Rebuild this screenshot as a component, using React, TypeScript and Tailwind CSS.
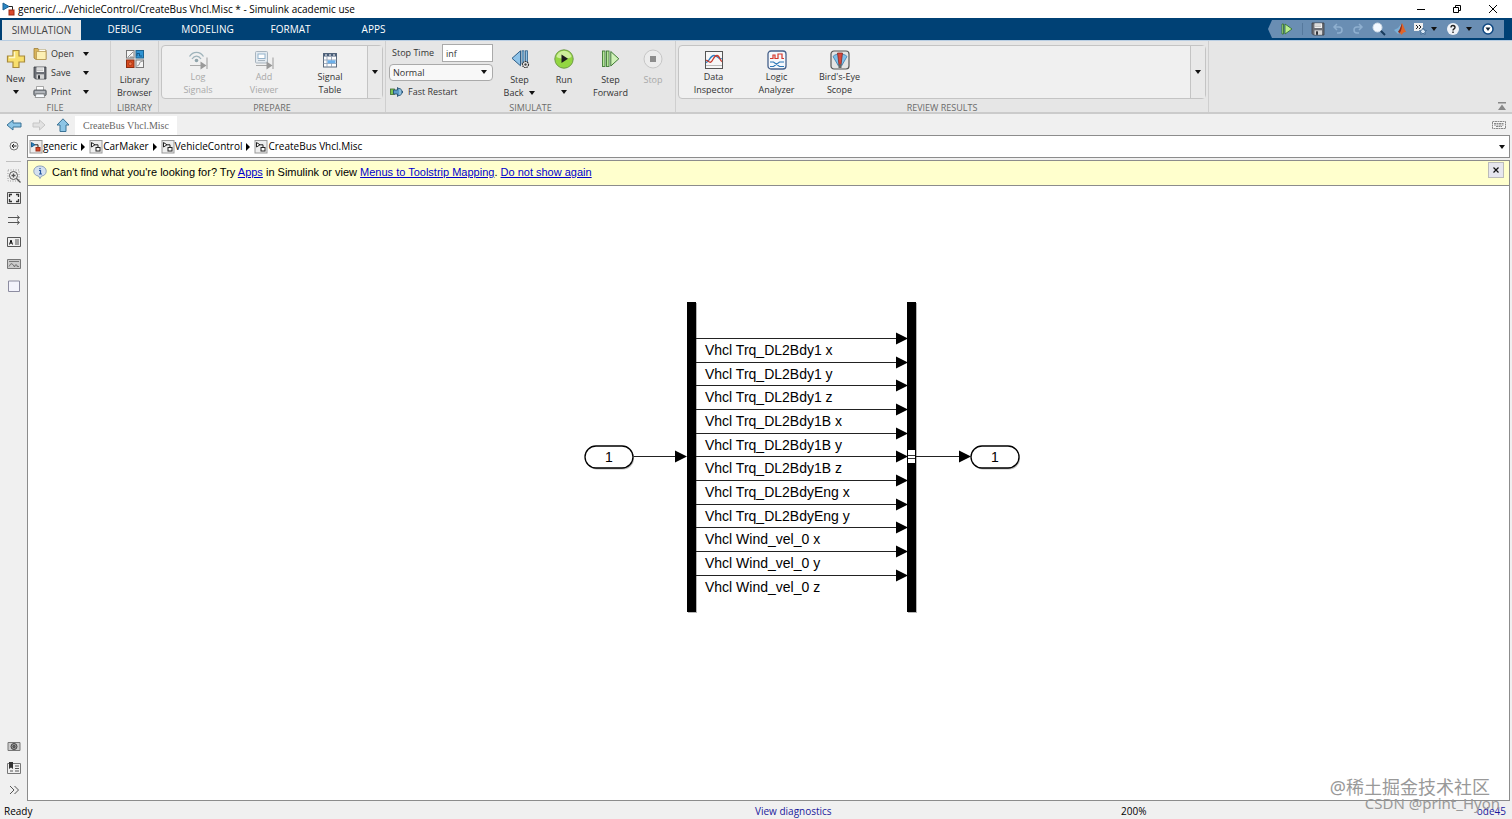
import { useState } from "react";
import type { ReactNode } from "react";
import clsx from "clsx";

const tabs = ["DEBUG", "MODELING", "FORMAT", "APPS"];

const signals = [
    "Vhcl Trq_DL2Bdy1 x",
    "Vhcl Trq_DL2Bdy1 y",
    "Vhcl Trq_DL2Bdy1 z",
    "Vhcl Trq_DL2Bdy1B x",
    "Vhcl Trq_DL2Bdy1B y",
    "Vhcl Trq_DL2Bdy1B z",
    "Vhcl Trq_DL2BdyEng x",
    "Vhcl Trq_DL2BdyEng y",
    "Vhcl Wind_vel_0 x",
    "Vhcl Wind_vel_0 y",
    "Vhcl Wind_vel_0 z",
];

function Caret({ className }: { className?: string }) {
    return (
        <svg viewBox="0 0 6 4" className={clsx("h-1 w-1.5 shrink-0", className)}>
            <path d="M0 0h6L3 4z" fill="#111" />
        </svg>
    );
}

/* ---------- toolstrip icons ---------- */

function NewIcon() {
    return (
        <svg viewBox="0 0 20 20" className="size-5">
            <path d="M7 1.500h6V7h5.500v6H13v5.500H7V13H1.500V7H7z" fill="#f8df6c" stroke="#a88a3c" strokeWidth="1.200" />
            <path d="M8.500 3v5.500H3" stroke="#fff8c8" strokeWidth="1.500" fill="none" />
        </svg>
    );
}

function OpenIcon() {
    return (
        <svg viewBox="0 0 14 14" className="size-3.5">
            <path d="M1 1.500h4l1 1.500h7v9.500H3L1 11z" fill="#d9b45c" stroke="#a07f35" strokeWidth="0.800" />
            <path d="M6 2.500h6.500V5H6z" fill="#fffdf2" stroke="#bbb08a" strokeWidth="0.500" />
            <path d="M3.500 4.500H13v8H3.500z" fill="#fdf0b4" stroke="#b3924c" strokeWidth="0.700" />
        </svg>
    );
}

function SaveIcon() {
    return (
        <svg viewBox="0 0 14 14" className="size-3.5">
            <path d="M1 1h12v12H2.500L1 11.500z" fill="#6c6f76" stroke="#3d4045" strokeWidth="0.800" />
            <rect x="3.500" y="1.300" width="7.500" height="4.700" fill="#f2f2f2" />
            <path d="M4 3h6M4 4.500h6" stroke="#aaa" strokeWidth="0.600" />
            <rect x="3.500" y="8.300" width="7.500" height="4.500" fill="#d5d5d5" />
            <rect x="5" y="9.300" width="2" height="3.500" fill="#33363b" />
        </svg>
    );
}

function PrintIcon() {
    return (
        <svg viewBox="0 0 14 14" className="size-3.5">
            <path d="M3.500 1.500h7V6h-7z" fill="#fff" stroke="#888" strokeWidth="0.700" />
            <rect x="0.800" y="5" width="12.400" height="5.500" rx="1" fill="#8d9299" stroke="#4b5057" strokeWidth="0.800" />
            <path d="M2 7h10" stroke="#d7dade" />
            <path d="M3 9h8l.8 3.500H2.200z" fill="#f7fbff" stroke="#777" strokeWidth="0.700" />
        </svg>
    );
}

function LibraryIcon() {
    return (
        <svg viewBox="0 0 20 20" className="size-5">
            <rect x="1.500" y="1.500" width="7.500" height="7.500" fill="#f4f4f4" stroke="#777" />
            <path d="M3 8l5-5M5 8h3" stroke="#777" strokeWidth="0.800" fill="none" />
            <rect x="11" y="1.500" width="7.500" height="7.500" fill="#2f93d3" stroke="#1d6390" />
            <path d="M12 7V4.500h2.500v2.500H17" stroke="#0c4a78" strokeWidth="0.800" fill="none" />
            <rect x="1.500" y="11" width="7.500" height="7.500" fill="#d94a1e" stroke="#8b2c10" />
            <circle cx="5.300" cy="14.800" r="1.800" fill="#f0774a" stroke="#8b2c10" strokeWidth="0.600" />
            <rect x="11" y="11" width="7.500" height="7.500" fill="#f4f4f4" stroke="#777" />
            <path d="M12 17l2-1 1-3 3-1" stroke="#888" strokeWidth="0.800" fill="none" />
        </svg>
    );
}

function LogSignalsIcon() {
    return (
        <svg viewBox="0 0 20 20" className="size-5" fill="none">
            <path d="M1.500 6.500C5 1 12 1 15.500 6.500M4 9c2.500-3.800 6.500-3.800 9 0" stroke="#9fb4bb" strokeWidth="1.300" />
            <circle cx="8.500" cy="10.500" r="1.800" fill="#8fa4ab" />
            <path d="M2 15.500h12M19 7.500V19" stroke="#aaa" strokeWidth="1.200" />
            <path d="M12.500 11.500l6 4-6 4z" fill="#999" />
        </svg>
    );
}

function AddViewerIcon() {
    return (
        <svg viewBox="0 0 20 20" className="size-5" fill="none">
            <rect x="1.500" y="1.500" width="12" height="11.500" rx="1" fill="#e3eaf0" stroke="#a9b5bf" />
            <rect x="4" y="4" width="7" height="4.500" fill="#fff" stroke="#94b3cc" />
            <path d="M4 10.500h7" stroke="#a9b5bf" />
            <path d="M2 15.500h12M19 7.500V19" stroke="#aaa" strokeWidth="1.200" />
            <path d="M12.500 11.500l6 4-6 4z" fill="#999" />
        </svg>
    );
}

function SignalTableIcon() {
    return (
        <svg viewBox="0 0 20 20" className="size-5">
            <rect x="3.500" y="3.500" width="13" height="13.500" fill="#fdfdfd" stroke="#5b6a7c" />
            <rect x="3.500" y="3.500" width="13" height="3" fill="#4a5f7a" />
            <path d="M7 6.500V17M11.500 6.500V17M3.500 10h13M3.500 13.500h13" stroke="#8a9bb0" strokeWidth="0.800" />
            <rect x="7.500" y="10.300" width="8" height="3" fill="#6cb0ea" />
            <path d="M5 5h2M9 5h2M13 5h2" stroke="#fff" />
        </svg>
    );
}

function StepBackIcon() {
    return (
        <svg viewBox="0 0 20 20" className="size-5">
            <path d="M10.500 1.800v15L2 9.300z" fill="#8fc3e8" stroke="#2f5f88" />
            <rect x="12" y="1.800" width="2" height="13" fill="#8fc3e8" stroke="#2f5f88" strokeWidth="0.800" />
            <rect x="15.500" y="1.800" width="2" height="13" fill="#8fc3e8" stroke="#2f5f88" strokeWidth="0.800" />
            <circle cx="15.500" cy="15.500" r="3" fill="#eee" stroke="#333" strokeWidth="1.200" strokeDasharray="1.6 0.6" />
            <circle cx="15.500" cy="15.500" r="1.200" fill="#444" />
        </svg>
    );
}

function RunIcon() {
    return (
        <svg viewBox="0 0 20 20" className="size-5">
            <circle cx="10" cy="10" r="9.200" fill="#93d641" stroke="#6f9a48" />
            <path d="M2.500 8a7.600 7.600 0 0115 0c-4 2-11 2-15 0z" fill="#cdee9b" />
            <path d="M7.500 5.500l6.500 4.300-6.500 4.300z" fill="#1c1c1c" />
        </svg>
    );
}

function StepForwardIcon() {
    return (
        <svg viewBox="0 0 20 20" className="size-5">
            <rect x="1.500" y="2" width="2.500" height="15.500" fill="#b5e79a" stroke="#3f7a35" strokeWidth="0.900" />
            <rect x="5.500" y="2" width="2.500" height="15.500" fill="#b5e79a" stroke="#3f7a35" strokeWidth="0.900" />
            <path d="M9.800 2.500v14.500l8-7.200z" fill="#d0f2b8" stroke="#3f7a35" />
        </svg>
    );
}

function StopIcon() {
    return (
        <svg viewBox="0 0 20 20" className="size-5">
            <circle cx="10" cy="10" r="9" fill="#ececec" stroke="#c6c6c6" />
            <rect x="7" y="7" width="6" height="6" fill="#8d8d8d" />
        </svg>
    );
}

function FastRestartIcon() {
    return (
        <svg viewBox="0 0 14 14" className="size-3.5">
            <rect x="0.500" y="4" width="4" height="5.500" fill="#7cc455" stroke="#3e6c2c" strokeWidth="0.800" />
            <path d="M3.500 5h4V2.500L13 7l-5.500 4.500V9h-4z" fill="#5b9bc8" stroke="#244e70" strokeWidth="0.900" />
            <path d="M9 3.500c2 0 3 1.500 3 3.500s-1 3.500-3 3.500" fill="#8fbfdd" stroke="#244e70" strokeWidth="0.800" />
        </svg>
    );
}

function DataInspectorIcon() {
    return (
        <svg viewBox="0 0 20 20" className="size-5" fill="none">
            <rect x="1.500" y="1.500" width="17" height="17" fill="#f7f7f7" stroke="#555" />
            <path d="M2 12.500c3 0 4-7 8-7s5 5 8 3" stroke="#2d7fc1" strokeWidth="1.300" />
            <path d="M2 10.500c2-1 3 3 5 1.500s3-6.500 6-6.500 3 6 5 6" stroke="#c9392b" strokeWidth="1.300" />
            <path d="M2 15.500h16" stroke="#bbb" />
        </svg>
    );
}

function LogicAnalyzerIcon() {
    return (
        <svg viewBox="0 0 20 20" className="size-5" fill="none">
            <rect x="1" y="1" width="18" height="18" rx="3" fill="#f5f8fc" stroke="#45608a" strokeWidth="1.300" />
            <path d="M3 8.500h3V5h2v3.500h3V4h4v4.500h2" stroke="#d6362a" strokeWidth="1.200" />
            <path d="M3 12h3.500l6 4.500H17M3 16.500h3.500l6-4.500H17" stroke="#2d78b8" strokeWidth="1.200" />
        </svg>
    );
}

function BirdsEyeIcon() {
    return (
        <svg viewBox="0 0 20 20" className="size-5">
            <rect x="1" y="1" width="18" height="18" rx="3" fill="#e4e4e4" stroke="#555" strokeWidth="1.200" />
            <path d="M3 6.500C6 3 14 3 17 6.500L11.500 16h-3z" fill="#7ec0ea" stroke="#2a6c9c" strokeWidth="0.700" />
            <path d="M7.500 3h5L11 15H9z" fill="#d8483c" stroke="#7c1e18" strokeWidth="0.700" />
            <path d="M8.500 14h3v4h-3z" fill="#666" />
        </svg>
    );
}

/* ---------- toolstrip parts ---------- */

type ToolProps = {
    icon: ReactNode;
    lines: string[];
    className?: string;
    disabled?: boolean;
    caret?: boolean;
};

function ToolButton({ icon, lines, className, disabled, caret }: ToolProps) {
    return (
        <button type="button" disabled={disabled} className={clsx("flex flex-col items-center leading-[13px]", disabled ? "text-[#a9a9a9]" : "text-[#333]", className)}>
            {icon}
            {lines.map((line, i) => (
                <span key={line} className="flex items-center gap-1.5 whitespace-nowrap">
                    {line}
                    {caret && lines.length > 1 && i === lines.length - 1 && <Caret />}
                </span>
            ))}
            {caret && lines.length === 1 && <Caret className="mt-1" />}
        </button>
    );
}

function FileRow({ icon, label }: { icon: ReactNode; label: string }) {
    return (
        <button type="button" className="flex h-[19px] items-center">
            {icon}
            <span className="w-9 pl-1 text-left">{label}</span>
            <Caret />
        </button>
    );
}

function Section({ label, className, children }: { label: string; className: string; children: ReactNode }) {
    return (
        <section className={clsx("flex shrink-0 flex-col border-r border-[#cfcfcf]", className)}>
            <div className="flex h-[61px] shrink-0 items-start">{children}</div>
            <h2 className="h-2.5 shrink-0 text-center leading-[11px] text-[#6b6b6b]">{label}</h2>
        </section>
    );
}

function Gallery({ children }: { children: ReactNode }) {
    return (
        <div className="mx-0.5 mt-1 flex h-[54px] flex-1 rounded-sm border border-[#c4c4c4] bg-[#f0f0f0]">
            <div className="flex flex-1 pt-1 pl-[3px]">{children}</div>
            <button type="button" aria-label="Show more" className="flex w-[15px] items-center justify-center border-l border-[#c4c4c4] bg-[#e9e9e9]">
                <Caret />
            </button>
        </div>
    );
}

/* ---------- model icons ---------- */

function ModelIcon({ color }: { color?: boolean }) {
    return (
        <svg viewBox="0 0 14 14" className="size-3.5 shrink-0" fill="none">
            <rect x="1" y="0.500" width="12" height="12.500" fill="#eee" stroke="#999" />
            <path d="M2.500 2.500v4.500l3.500-2.200z" fill={color ? "#2b86c5" : "#fff"} stroke={color ? "#1c5f90" : "#222"} />
            <path d="M6 4.800h3v3" stroke="#222" />
            <rect x="7" y="7.500" width="4" height="3.500" fill={color ? "#d9482b" : "#fff"} stroke={color ? "#9b2c14" : "#222"} />
        </svg>
    );
}

function Crumb({ label, color, last }: { label: string; color?: boolean; last?: boolean }) {
    return (
        <li className="flex items-center">
            <a href="#" className="flex items-center">
                <ModelIcon color={color} />
                {label}
            </a>
            {!last && (
                <svg viewBox="0 0 4 8" className="mr-1 ml-1 h-2 w-1">
                    <path d="M0 0l4 4-4 4z" fill="#000" />
                </svg>
            )}
        </li>
    );
}

function SideButton({ label, children }: { label: string; children: ReactNode }) {
    return (
        <button type="button" aria-label={label} className="flex h-[22px] w-full items-center justify-center">
            <svg viewBox="0 0 14 14" className="size-3.5" fill="none" stroke="#555">
                {children}
            </svg>
        </button>
    );
}

function Port({ x }: { x: number }) {
    return (
        <g>
            <rect x={x + 1} y="152.500" width="48" height="22" rx="11" fill="#bbb" />
            <rect x={x} y="151" width="48" height="22" rx="11" fill="#fff" stroke="#000" strokeWidth="1.300" />
            <text x={x + 24} y="167" textAnchor="middle">1</text>
        </g>
    );
}

function Wire({ x1, x2, y }: { x1: number; x2: number; y: number }) {
    return (
        <g>
            <path d={`M${x1} ${y}H${x2 - 6}`} stroke="#222" />
            <path d={`M${x2 - 12} ${y - 6}L${x2} ${y}L${x2 - 12} ${y + 6}z`} />
        </g>
    );
}

function Diagram() {
    return (
        <svg viewBox="0 0 440 320" width="440" height="320" className="absolute top-[115px] left-[556px] font-['Liberation_Sans',sans-serif] text-[14px]">
            <rect x="104" y="2" width="9" height="310" fill="#b5b5b5" />
            <rect x="324" y="2" width="9" height="310" fill="#b5b5b5" />
            <rect x="103" y="1" width="9" height="310" />
            <rect x="323" y="1" width="9" height="310" />
            {signals.map((name, i) => (
                <g key={name}>
                    <Wire x1={112} x2={324} y={37.500 + Math.round(i * 23.650)} />
                    <text x="121" y={54 + Math.round(i * 23.650)}>{name}</text>
                </g>
            ))}
            <Wire x1={49} x2={103} y={155.500} />
            <Wire x1={332} x2={387} y={155.500} />
            <path d="M324 149h7v13h-7z" fill="#fff" />
            <path d="M324 154.500h7M324 157.500h7" stroke="#333" />
            <g transform="translate(0 -6)">
                <Port x={1} />
                <Port x={387} />
            </g>
        </svg>
    );
}

export default function App() {
    const [stopTime, setStopTime] = useState("inf");
    const [mode, setMode] = useState("Normal");

    return (
        <div className="relative flex min-h-screen flex-col overflow-hidden bg-[#f0f0f0] font-['Open_Sans',sans-serif] text-[9px] text-[#333]">
            <header className="flex h-[18px] items-center bg-white pr-[14px] pl-0.5 text-[10px] text-black">
                <svg viewBox="0 0 14 14" className="size-3.5" fill="none">
                    <path d="M1 1v7l6-3.500z" fill="#2b86c5" stroke="#1c5f90" />
                    <path d="M7 4.500h3.500V8" stroke="#222" />
                    <rect x="7" y="8" width="5" height="5" fill="#d9482b" stroke="#9b2c14" />
                </svg>
                <h1 className="flex-1 pl-0.5">generic/.../VehicleControl/CreateBus Vhcl.Misc * - Simulink academic use</h1>
                <div className="flex gap-[26px]">
                    <button type="button" aria-label="Minimize">
                        <svg viewBox="0 0 10 10" className="size-2.5"><path d="M1 5.500h8" stroke="#000" /></svg>
                    </button>
                    <button type="button" aria-label="Restore">
                        <svg viewBox="0 0 10 10" className="size-2.5" fill="none" stroke="#000"><path d="M1.500 3.500h5v5h-5zM3.500 3.500v-2h5v5h-2" /></svg>
                    </button>
                    <button type="button" aria-label="Close">
                        <svg viewBox="0 0 10 10" className="size-2.5" stroke="#000"><path d="M1 1l8 8M9 1l-8 8" /></svg>
                    </button>
                </div>
            </header>

            <div className="flex h-[22px] items-center bg-[#004175] pr-2 text-[10px] text-white">
                <button type="button" className="mt-0.5 ml-0.5 h-5 w-[79px] bg-[#e9e9e9] text-[#444]">SIMULATION</button>
                <nav className="flex flex-1 pl-0.5">
                    {tabs.map((tab) => (
                        <button key={tab} type="button" className="w-[83px] text-center">{tab}</button>
                    ))}
                </nav>
                <div className="flex items-center">
                    <svg viewBox="0 0 6 18" className="h-[18px] w-1.5"><path d="M6 0v18H4L0 9l4-9z" fill="#6a8eb3" /></svg>
                    <div className="flex h-[18px] w-[230px] items-center bg-[#6a8eb3] pl-[7px]">
                        <button type="button" aria-label="Step forward" className="w-[21px]">
                            <svg viewBox="0 0 12 12" className="size-3"><path d="M1 1h1.500v10H1zM4 1l7 5-7 5z" fill="#b9ef8d" stroke="#2f6b2c" strokeWidth="0.800" /></svg>
                        </button>
                        <div className="h-3 border-l border-[#56799d] pl-2" />
                        <button type="button" aria-label="Save" className="w-[21px]"><SaveIcon /></button>
                        <button type="button" aria-label="Undo" className="w-5">
                            <svg viewBox="0 0 12 12" className="size-3" fill="none" stroke="#8fb0d0" strokeWidth="1.500"><path d="M5 1L2 4l3 3M2 4h5c4 0 4 6 0 6H5" /></svg>
                        </button>
                        <button type="button" aria-label="Redo" className="w-5">
                            <svg viewBox="0 0 12 12" className="size-3" fill="none" stroke="#8fb0d0" strokeWidth="1.500"><path d="M7 1l3 3-3 3M10 4H5C1 4 1 10 5 10h2" /></svg>
                        </button>
                        <button type="button" aria-label="Find" className="w-[21px]">
                            <svg viewBox="0 0 14 14" className="size-3.5">
                                <path d="M8.500 8.500l4.500 4.500" stroke="#173a5c" strokeWidth="2" />
                                <circle cx="5.500" cy="5.500" r="4.500" fill="#f4f9ff" stroke="#cfdbe6" />
                            </svg>
                        </button>
                        <button type="button" aria-label="MATLAB" className="w-5">
                            <svg viewBox="0 0 14 14" className="size-3.5">
                                <path d="M1 8l4-2 4-5-2 9-2 2z" fill="#7db1d8" />
                                <path d="M9 1c2 3 2.500 7 4.500 9.500-2-1-3 0-5 2.500-.5-1.500-1.500-2-3-2z" fill="#e0652a" />
                                <path d="M9 1c-1 3-2 7-4 8.500l1.500 1.500c2-2 2.500-6 2.500-10z" fill="#8c2c1c" />
                            </svg>
                        </button>
                        <button type="button" aria-label="Favorites" className="flex w-[33px] items-center gap-1">
                            <svg viewBox="0 0 14 14" className="size-3.5" fill="none">
                                <rect x="1" y="1" width="9" height="8" fill="#eee" />
                                <path d="M3 3l2 2-2 2M6 3l2 2-2 2" stroke="#222" />
                                <path d="M10 6l1.200 2.200 2.300.3-1.700 1.500.4 2.300-2.200-1-2.200 1 .4-2.300L6.500 8.500l2.300-.3z" fill="#d6e6f5" stroke="#345e88" strokeWidth="0.800" />
                            </svg>
                            <Caret />
                        </button>
                        <button type="button" aria-label="Help" className="flex w-9 items-center gap-1.5">
                            <svg viewBox="0 0 14 14" className="size-3.5" fill="none">
                                <circle cx="7" cy="7" r="6" fill="#f0f3f7" />
                                <path d="M5 5.500c0-3 4-2.500 4 0 0 1.500-2 1.300-2 3M7 9.500V11" stroke="#222" strokeWidth="1.400" />
                            </svg>
                            <Caret />
                        </button>
                        <button type="button" aria-label="Options">
                            <svg viewBox="0 0 12 12" className="size-3">
                                <circle cx="6" cy="6" r="5" fill="#fff" stroke="#0d4680" strokeWidth="1.500" />
                                <path d="M3.500 4.500h5L6 8z" fill="#123" />
                            </svg>
                        </button>
                    </div>
                </div>
            </div>

            <div className="flex h-[74px] border-t border-b-2 border-t-[#b8cde2] border-b-[#cbcbcb] bg-[#e6e6e6]">
                <Section label="FILE" className="w-[111px]">
                    <ToolButton icon={<span className="mb-0.5"><NewIcon /></span>} lines={["New"]} caret className="w-[31px] gap-px pt-2" />
                    <div className="flex flex-col pt-[3px] pl-0.5">
                        <FileRow icon={<OpenIcon />} label="Open" />
                        <FileRow icon={<SaveIcon />} label="Save" />
                        <FileRow icon={<PrintIcon />} label="Print" />
                    </div>
                </Section>
                <Section label="LIBRARY" className="w-12">
                    <ToolButton icon={<span className="mb-1"><LibraryIcon /></span>} lines={["Library", "Browser"]} className="w-full pt-2" />
                </Section>
                <Section label="PREPARE" className="w-[227px]">
                    <Gallery>
                        <ToolButton icon={<LogSignalsIcon />} lines={["Log", "Signals"]} disabled className="w-[66px]" />
                        <ToolButton icon={<AddViewerIcon />} lines={["Add", "Viewer"]} disabled className="w-[66px]" />
                        <ToolButton icon={<SignalTableIcon />} lines={["Signal", "Table"]} className="w-[66px]" />
                    </Gallery>
                </Section>
                <Section label="SIMULATE" className="w-[290px]">
                    <div className="flex w-[107px] flex-col gap-0.5 pt-[3px] pl-[3px]">
                        <label className="flex h-[18px] items-center justify-between pl-[3px]">
                            Stop Time
                            <input value={stopTime} onChange={(e) => setStopTime(e.target.value)} className="h-[18px] w-[51px] border border-[#aaa] bg-white px-[3px]" />
                        </label>
                        <div className="relative">
                            <select aria-label="Simulation mode" value={mode} onChange={(e) => setMode(e.target.value)} className="block h-[17px] w-full appearance-none rounded-sm border border-[#aaa] bg-[#f8f8f8] px-[3px]">
                                <option>Normal</option>
                                <option>Accelerator</option>
                            </select>
                            <Caret className="pointer-events-none absolute top-1.5 right-1.5" />
                        </div>
                        <button type="button" className="flex h-[18px] items-center gap-1 pl-px">
                            <FastRestartIcon />
                            Fast Restart
                        </button>
                    </div>
                    <ToolButton icon={<span className="mb-1"><StepBackIcon /></span>} lines={["Step", "Back"]} caret className="w-[53px] pt-2" />
                    <ToolButton icon={<span className="mb-1"><RunIcon /></span>} lines={["Run"]} caret className="w-9 pt-2" />
                    <ToolButton icon={<span className="mb-1"><StepForwardIcon /></span>} lines={["Step", "Forward"]} className="w-[57px] pt-2" />
                    <ToolButton icon={<span className="mb-1"><StopIcon /></span>} lines={["Stop"]} disabled className="w-7 pt-2" />
                </Section>
                <Section label="REVIEW RESULTS" className="w-[533px]">
                    <Gallery>
                        <ToolButton icon={<DataInspectorIcon />} lines={["Data", "Inspector"]} className="w-[63px]" />
                        <ToolButton icon={<LogicAnalyzerIcon />} lines={["Logic", "Analyzer"]} className="w-[63px]" />
                        <ToolButton icon={<BirdsEyeIcon />} lines={["Bird's-Eye", "Scope"]} className="w-[63px]" />
                    </Gallery>
                </Section>
                <div className="flex flex-1 items-end justify-end pr-1.5 pb-0.5">
                    <button type="button" aria-label="Collapse toolstrip">
                        <svg viewBox="0 0 8 8" className="size-2"><path d="M0 0h8v1.500H0zM4 2.500L8 8H0z" fill="#888" /></svg>
                    </button>
                </div>
            </div>

            <div className="flex h-[21px] items-center pr-1.5 pl-1.5">
                <div className="flex w-[69px] gap-2.5">
                    <button type="button" aria-label="Back">
                        <svg viewBox="0 0 16 14" className="h-3.5 w-4"><path d="M1 7l6-5v3h8v4H7v3z" fill="#8cc5e6" stroke="#3a7396" /></svg>
                    </button>
                    <button type="button" aria-label="Forward" disabled>
                        <svg viewBox="0 0 14 14" className="size-3.5"><path d="M13 7L7.500 2v3H1v4h6.500v3z" fill="#e2e2e2" stroke="#c6c6c6" /></svg>
                    </button>
                    <button type="button" aria-label="Up to parent">
                        <svg viewBox="0 0 14 14" className="size-3.5"><path d="M7 .8L13 7h-3v6.500H4V7H1z" fill="#8cc5e6" stroke="#3a7396" /></svg>
                    </button>
                </div>
                <div className="mt-0.5 h-[19px] bg-white px-2 font-['Liberation_Serif',serif] text-[10px] leading-[19px] text-[#666]">
                    CreateBus Vhcl.Misc
                </div>
                <button type="button" aria-label="Keyboard shortcuts" className="ml-auto">
                    <svg viewBox="0 0 14 8" className="h-2 w-3.5"><path d="M.5.5h13v7H.5zM2 2.500h10M2 4h10M4 5.500h6" fill="#f5f5f5" stroke="#888" strokeDasharray="2 0.500" /></svg>
                </button>
            </div>

            <div className="flex flex-1">
                <aside className="flex w-[27px] shrink-0 flex-col">
                    <SideButton label="Hide explorer bar">
                        <circle cx="7" cy="7" r="4" stroke="#777" />
                        <path d="M5 7h4.500M7 5L5 7l2 2" stroke="#222" />
                    </SideButton>
                    <hr className="mx-1.5 mt-1 mb-[3px] border-[#c0c0c0]" />
                    <SideButton label="Zoom">
                        <path d="M1 1h11v11H1z" stroke="#999" strokeDasharray="1 1.500" />
                        <circle cx="6.500" cy="6.500" r="4" />
                        <path d="M4.500 6.500h4M6.500 4.500v4M9.500 9.500l4 4" strokeWidth="1.300" />
                    </SideButton>
                    <SideButton label="Fit to view">
                        <path d="M.5 1.500h13v11H.5z" />
                        <path d="M2.500 6V3.500H5M9 3.500h2.500V6M2.500 8v2.500H5M9 10.500h2.500V8" strokeWidth="1.300" stroke="#333" />
                    </SideButton>
                    <SideButton label="Show sample times">
                        <path d="M1 4.500h11M1 9.500h11M10 2.500l2.500 2-2.500 2M10 7.500l2.500 2-2.500 2" />
                    </SideButton>
                    <SideButton label="Annotation">
                        <path d="M.5 2.500h13v9H.5z" />
                        <path d="M2.500 9.500L4 5l1.500 4.500M3 8h2" stroke="#111" />
                        <path d="M8 5h4M8 7h4M8 9h4" />
                    </SideButton>
                    <SideButton label="Image">
                        <path d="M.5 2.500h13v9H.5z" fill="#ccc" stroke="#777" />
                        <path d="M2 4.500h10M2 9.500l2-3 2 1 1 2h1V8h2v1.500h2" stroke="#777" />
                    </SideButton>
                    <SideButton label="Area">
                        <path d="M1.500 2h11v10.500h-11z" fill="#f3f3fc" stroke="#8c8ca0" />
                    </SideButton>
                    <div className="mt-auto">
                        <SideButton label="Screenshot">
                            <path d="M1 3.500h12v8H1z" fill="#ccc" stroke="#777" />
                            <circle cx="7" cy="7.500" r="3" fill="#999" stroke="#444" />
                            <circle cx="7" cy="7.500" r="1" stroke="#333" />
                        </SideButton>
                        <SideButton label="Model data">
                            <path d="M.5 2.500h13v10H.5z" stroke="#777" />
                            <path d="M2 1h4v7L4 6.500 2 8z" fill="#333" stroke="none" />
                            <path d="M8 5h4M8 7.500h4M3 10h3M8 10h4" />
                        </SideButton>
                        <SideButton label="More">
                            <path d="M3 3l4 4-4 4M7.500 3l4 4-4 4" />
                        </SideButton>
                    </div>
                </aside>

                <main className="mr-0.5 flex min-w-0 flex-1 flex-col">
                    <div className="flex h-[23px] items-center justify-between border border-[#8c8c8c] bg-white px-px text-[10px] text-black">
                        <nav aria-label="Model path">
                            <ol className="flex">
                                <Crumb label="generic" color />
                                <Crumb label="CarMaker" />
                                <Crumb label="VehicleControl" />
                                <Crumb label="CreateBus Vhcl.Misc" last />
                            </ol>
                        </nav>
                        <button type="button" aria-label="Recent paths" className="pr-0.5"><Caret className="w-2" /></button>
                    </div>

                    <div className="mt-0.5 flex h-[26px] items-start justify-between border border-[#8c8c8c] bg-[#ffffcd] pt-px pr-[5px] pl-[5px] font-['Liberation_Sans',sans-serif] text-[11px] text-black">
                        <p className="flex items-center pt-0.5">
                            <svg viewBox="0 0 14 14" className="mr-[5px] size-3.5" fill="none">
                                <path d="M7 1c8 0 8 9.500 1.500 10L7 13.500 5.500 11C-1 10.500-1 1 7 1z" fill="#d3e0f0" stroke="#8da0b8" />
                                <path d="M6 5.500h1.500V9M6 9h3M7 3v1.300" stroke="#2456a0" strokeWidth="1.200" />
                            </svg>
                            <span>
                                Can't find what you're looking for? Try <a href="#" className="text-[#0000cc] underline">Apps</a> in Simulink or view{" "}
                                <a href="#" className="text-[#0000cc] underline">Menus to Toolstrip Mapping</a>.{" "}
                                <a href="#" className="text-[#0000cc] underline">Do not show again</a>
                            </span>
                        </p>
                        <button type="button" aria-label="Dismiss" className="flex size-4 items-center justify-center border border-[#bbb] bg-[#e6e6ee]">
                            <svg viewBox="0 0 6 6" className="size-1.5" stroke="#111" strokeWidth="1.200"><path d="M.5.5l5 5M5.500.5l-5 5" /></svg>
                        </button>
                    </div>

                    <div className="relative min-h-[480px] flex-1 border-x border-b border-[#8c8c8c] bg-white">
                        <Diagram />
                    </div>
                </main>
            </div>

            <footer className="flex h-[18px] items-center pt-0.5 pr-1.5 pl-1 text-[10px] text-black">
                <span className="w-1/2">Ready</span>
                <a href="#" className="w-[61%] max-w-[366px] text-[#1a1a9c]">View diagnostics</a>
                <span className="flex flex-1 justify-between">
                    <span>200%</span>
                    <a href="#" className="text-[#1a1a9c]">ode45</a>
                </span>
            </footer>

            <div className="pointer-events-none absolute right-3 bottom-2.5 flex flex-col items-end text-[#999]">
                <span className="pr-2.5 font-['Noto_Sans','Noto_Sans_CJK_SC',sans-serif] text-[18px] leading-5">@稀土掘金技术社区</span>
                <span className="font-['Noto_Sans',sans-serif] text-[15px] leading-3">CSDN @print_Hyon</span>
            </div>
        </div>
    );
}
